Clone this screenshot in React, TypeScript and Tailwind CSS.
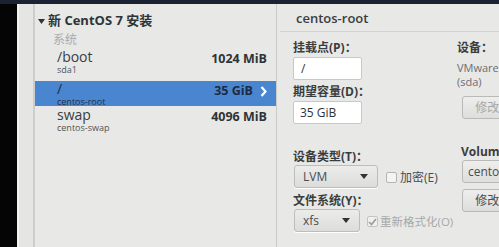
import React from 'react';

const font = { fontFamily: '"Open Sans", "Noto Sans", "Noto Sans CJK SC", sans-serif' };

const Caret = () => (
  <svg width="8" height="5" viewBox="0 0 8 5" className="shrink-0">
    <path d="M0 0 L8 0 L4 5 Z" fill="#2e3436" />
  </svg>
);

type Row = { name: string; sub: string; size: string; selected?: boolean; pt: string };

const rows: Row[] = [
  { name: '/boot', sub: 'sda1', size: '1024 MiB', pt: 'pt-0 h-[31px]' },
  { name: '/', sub: 'centos-root', size: '35 GiB', selected: true, pt: 'pt-[1px] h-[25px]' },
  { name: 'swap', sub: 'centos-swap', size: '4096 MiB', pt: 'pt-[2px] h-[26px]' },
];

const MountRow: React.FC<{ row: Row }> = ({ row }) => (
  <div className={`flex items-start justify-between pl-[22px] pr-[9px] ${row.pt} ${row.selected ? 'bg-[#4a86d0]' : ''}`}>
    <div className="flex flex-col">
      <span className={`h-[14px] leading-[14px] text-[14px] ${row.selected ? 'text-[#1b2b45]' : 'text-[#3a3d3e]'}`}>{row.name}</span>
      <span className={`h-[10px] leading-[10px] text-[9px] mt-[1px] ${row.selected ? 'text-[#1e3150]' : 'text-[#505456]'}`}>{row.sub}</span>
    </div>
    <div className="flex items-center h-[14px] mt-[2px] gap-[7px]">
      <span className={`text-[12.5px] font-bold ${row.selected ? 'text-[#1b2b45]' : 'text-[#2e3436]'}`}>{row.size}</span>
      {row.selected && (
        <svg width="7" height="11" viewBox="0 0 7 11">
          <path d="M1.5 1 L5.5 5.5 L1.5 10" stroke="#ffffff" strokeWidth="2.2" fill="none" />
        </svg>
      )}
    </div>
  </div>
);

const Button: React.FC<{ children: React.ReactNode; disabled?: boolean; className?: string }> = ({ children, disabled, className }) => (
  <div
    className={`flex items-center justify-center h-[23px] shrink-0 whitespace-nowrap rounded-[3px] border border-[#b9b9b7] bg-gradient-to-b from-[#eeeeec] to-[#dededc] text-[12px] ${disabled ? 'text-[#a6a8a8]' : 'text-[#4a4d4f]'} ${className ?? ''}`}
  >
    {children}
  </div>
);

const Combo: React.FC<{ value: string; w: string }> = ({ value, w }) => (
  <div className={`flex items-center justify-between h-[23px] ${w} shrink-0 pl-[8px] pr-[9px] rounded-[3px] border border-[#bdbdbb] bg-gradient-to-b from-[#ececea] to-[#dcdcda] shadow-[0_1px_0_#ffffff]`}>
    <span className="text-[12px] text-[#4a4d4f]">{value}</span>
    <Caret />
  </div>
);

const Label: React.FC<{ children: React.ReactNode; className?: string }> = ({ children, className }) => (
  <div className={`h-[14px] leading-[14px] whitespace-nowrap text-[12px] font-bold text-[#3a3d3e] ${className ?? ''}`}>{children}</div>
);

export default function App() {
  return (
    <div className="w-[499px] h-[247px] overflow-hidden flex flex-col bg-[#e8e8e7]" style={font}>
      <div className="h-[4px] bg-[#1b2333] shrink-0" />
      <div className="flex flex-1 min-h-0">
        <div className="w-[17px] bg-[#050505] shrink-0" />
        <div className="w-[18px] shrink-0 bg-[#e5e5e4] border-l-2 border-l-[#f2f2f1] border-r-2 border-r-[#cdcdcb]" />

        {/* mount point list */}
        <div className="w-[242px] shrink-0 border-r border-r-[#cbcbc9] bg-[#e8e8e7] flex flex-col pt-[10px]">
          <div className="flex items-center h-[14px] pl-[3px] gap-[3px]">
            <svg width="7" height="5" viewBox="0 0 7 5">
              <path d="M0 0 L7 0 L3.5 5 Z" fill="#2e3436" />
            </svg>
            <span className="text-[13px] font-bold text-[#2e3436]">新 CentOS 7 安装</span>
          </div>
          <div className="h-[12px] leading-[12px] mt-[6px] pl-[18px] text-[12px] text-[#a9abab]">系统</div>
          <div className="mt-[4px] flex flex-col">
            {rows.map((r) => (
              <MountRow key={r.name} row={r} />
            ))}
          </div>
        </div>

        {/* details */}
        <div className="flex-1 min-w-0 flex flex-col overflow-hidden">
          <div className="h-[28px] flex items-center pl-[16px] border-b border-b-[#d2d2d0] ml-[3px]">
            <span className="text-[13px] font-semibold text-[#3a3d3e] mt-[2px]">centos-root</span>
          </div>
          <div className="flex pl-[16px] pt-[9px]">
            <div className="w-[164px] shrink-0 flex flex-col">
              <Label>挂载点(P)：</Label>
              <div className="mt-[2px] w-[69px] h-[23px] bg-white border border-[#c8c8c6] rounded-[2px] flex items-center pl-[7px] text-[12px] text-[#2e3436]">/</div>
              <Label className="mt-[5px]">期望容量(D)：</Label>
              <div className="mt-[2px] w-[69px] h-[23px] bg-white border border-[#c8c8c6] rounded-[2px] flex items-center pl-[6px] text-[12px] text-[#2e3436]">35 GiB</div>
              <Label className="mt-[26px]">设备类型(T)：</Label>
              <div className="mt-[1px] flex items-center gap-[8px] pl-[1px]">
                <Combo value="LVM" w="w-[84px]" />
                <div className="flex items-center gap-[3px] mt-[2px] whitespace-nowrap">
                  <div className="w-[11px] h-[11px] shrink-0 border border-[#b4b4b2] rounded-[2px] bg-[#f4f4f3]" />
                  <span className="text-[12px] text-[#4a4d4f]">加密(E)</span>
                </div>
              </div>
              <Label className="mt-[6px]">文件系统(Y)：</Label>
              <div className="mt-[1px] flex items-center gap-[7px] pl-[1px]">
                <Combo value="xfs" w="w-[66px]" />
                <div className="flex items-center gap-[2px] mt-[2px] whitespace-nowrap">
                  <div className="w-[11px] h-[11px] shrink-0 border border-[#c4c4c2] rounded-[2px] bg-[#f0f0ef] flex items-center justify-center">
                    <svg width="9" height="8" viewBox="0 0 9 8">
                      <path d="M1 4 L3.5 6.5 L8 1" stroke="#9a9c9c" strokeWidth="1.6" fill="none" />
                    </svg>
                  </div>
                  <span className="text-[11.5px] text-[#a6a8a8]">重新格式化(O)</span>
                </div>
              </div>
            </div>
            <div className="flex-1 min-w-0 flex flex-col">
              <Label>设备：</Label>
              <div className="mt-[6px] text-[11px] leading-[14px] text-[#6b6e70] whitespace-nowrap">VMware,</div>
              <div className="text-[11px] leading-[14px] text-[#6b6e70]">(sda)</div>
              <Button disabled className="mt-[7px] ml-[5px] w-[60px]">修改...</Button>
              <Label className="mt-[26px] ml-[4px]">Volume Group</Label>
              <Button className="mt-[1px] ml-[5px] w-[60px] justify-start pl-[5px]">centos</Button>
              <Button className="mt-[6px] ml-[5px] w-[60px]">修改...</Button>
            </div>
          </div>
        </div>
      </div>
    </div>
  );
}
